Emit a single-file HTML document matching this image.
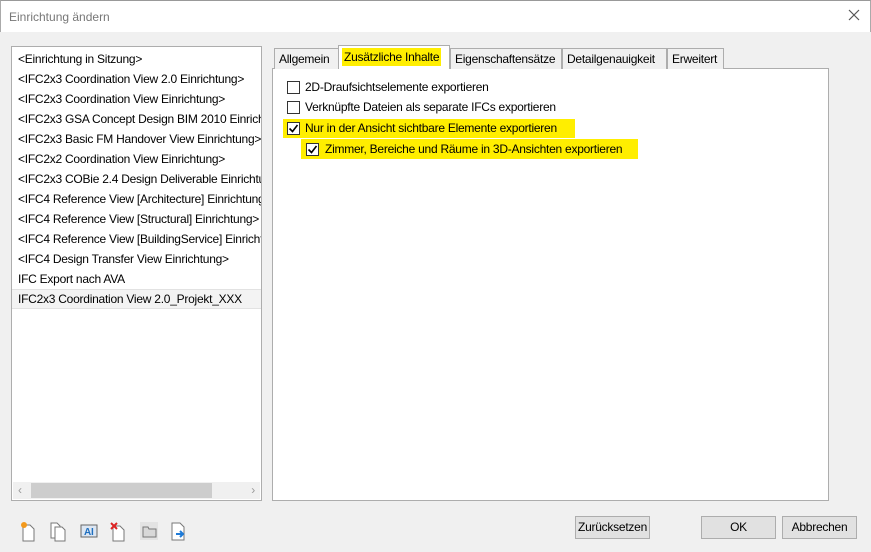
<!DOCTYPE html>
<html><head><style>
*{margin:0;padding:0;box-sizing:border-box}
body{width:871px;height:552px;background:#f0f0f0;font-family:"Liberation Sans",sans-serif;font-size:12px;letter-spacing:-0.25px;color:#000;position:relative;overflow:hidden}
.abs{position:absolute}
.title{left:0;top:0;width:871px;height:32px;background:#fff;color:#777;padding:9px 0 0 8px;font-size:12px;letter-spacing:0;border-top:1px solid #999;border-left:1px solid #aaa;border-right:1px solid #aaa}
.list{left:11px;top:46px;width:251px;height:455px;background:#fff;border:1px solid #adadad}
.item{height:20px;line-height:20px;padding-left:6px;white-space:nowrap;overflow:hidden;width:249px}
.sel{background:#f3f3f3;border-top:1px solid #e2e2e2;border-bottom:1px solid #e2e2e2;line-height:18px}
.sb{left:1px;bottom:1px;width:247px;height:17px;background:#f0f0f0}
.thumb{left:18px;top:1px;width:181px;height:15px;background:#cdcdcd}
.panel{left:272px;top:68px;width:557px;height:433px;background:#fff;border:1px solid #adadad}
.tab{top:48px;height:21px;border:1px solid #adadad;border-bottom:none;background:#f0f0f0;padding:3px 4px 0;white-space:nowrap;overflow:hidden}
.cb{width:13px;height:13px;border:1px solid #333;background:#fff}
.row{white-space:nowrap}
.hl{background:#ffee00}
.btn{height:23px;border:1px solid #adadad;background:#e1e1e1;text-align:center;line-height:21px}
</style></head><body>
<div class="abs title">Einrichtung ändern</div>
<svg class="abs" style="left:848px;top:9px" width="12" height="12"><path d="M1 1L11 11M11 1L1 11" stroke="#555" stroke-width="1.2"/></svg>
<div class="abs list">
<div style="height:2px"></div>
<div class="item">&lt;Einrichtung in Sitzung&gt;</div>
<div class="item">&lt;IFC2x3 Coordination View 2.0 Einrichtung&gt;</div>
<div class="item">&lt;IFC2x3 Coordination View Einrichtung&gt;</div>
<div class="item">&lt;IFC2x3 GSA Concept Design BIM 2010 Einrichtung&gt;</div>
<div class="item">&lt;IFC2x3 Basic FM Handover View Einrichtung&gt;</div>
<div class="item">&lt;IFC2x2 Coordination View Einrichtung&gt;</div>
<div class="item">&lt;IFC2x3 COBie 2.4 Design Deliverable Einrichtung&gt;</div>
<div class="item">&lt;IFC4 Reference View [Architecture] Einrichtung&gt;</div>
<div class="item">&lt;IFC4 Reference View [Structural] Einrichtung&gt;</div>
<div class="item">&lt;IFC4 Reference View [BuildingService] Einrichtung&gt;</div>
<div class="item">&lt;IFC4 Design Transfer View Einrichtung&gt;</div>
<div class="item">IFC Export nach AVA</div>
<div class="item sel">IFC2x3 Coordination View 2.0_Projekt_XXX</div>
<div class="abs sb"><div class="abs thumb"></div>
<span class="abs" style="left:5px;top:1px;color:#999">‹</span><span class="abs" style="right:5px;top:1px;color:#999">›</span></div>
</div>
<div class="abs panel"></div>
<div class="abs tab" style="left:274px;width:65px">Allgemein</div>
<div class="abs tab" style="left:338px;top:45px;height:24px;width:112px;background:#fff;padding:4px 3px 0"><span class="hl" style="padding:2px 2px">Zusätzliche Inhalte</span></div>
<div class="abs tab" style="left:450px;width:112px">Eigenschaftensätze</div>
<div class="abs tab" style="left:562px;width:105px">Detailgenauigkeit</div>
<div class="abs tab" style="left:667px;width:57px">Erweitert</div>
<div class="abs hl" style="left:283px;top:119px;width:292px;height:19px"></div>
<div class="abs hl" style="left:301px;top:139px;width:337px;height:20px"></div>
<div class="abs cb" style="left:287px;top:81px"></div><div class="abs row" style="left:305px;top:80px">2D-Draufsichtselemente exportieren</div>
<div class="abs cb" style="left:287px;top:101px"></div><div class="abs row" style="left:305px;top:100px">Verknüpfte Dateien als separate IFCs exportieren</div>
<div class="abs cb" style="left:287px;top:122px"><svg width="11" height="11" style="display:block"><path d="M1.5 5.5L4.5 8.5L9.5 2" stroke="#000" stroke-width="1.6" fill="none"/></svg></div><div class="abs row" style="left:305px;top:121px">Nur in der Ansicht sichtbare Elemente exportieren</div>
<div class="abs cb" style="left:306px;top:143px"><svg width="11" height="11" style="display:block"><path d="M1.5 5.5L4.5 8.5L9.5 2" stroke="#000" stroke-width="1.6" fill="none"/></svg></div><div class="abs row" style="left:325px;top:142px">Zimmer, Bereiche und Räume in 3D-Ansichten exportieren</div>
<svg class="abs" style="left:18px;top:522px" width="175" height="22">
<g fill="#fff" stroke="#777"><path d="M5 3h7l4 4v12H5z"/><path d="M33 1h6l3 3v12H33z"/><path d="M37 5h7l3 3v11H37z"/><path d="M95 4h7l4 4v11H95z"/><path d="M154 1h8l4 4v13H154z"/></g>
<circle cx="6" cy="3" r="3" fill="#f39a1e"/>
<rect x="63" y="3" width="16" height="12" fill="#dce6f2" stroke="#666"/><text x="66" y="13" font-size="10" font-weight="bold" fill="#1f6fbf" font-family="Liberation Sans">AI</text>
<path d="M93 1l6 6M99 1l-6 6" stroke="#d22" stroke-width="2"/>
<rect x="122" y="0" width="18" height="18" fill="#e3e3e3"/><path d="M125 5h5l1 2h7v8h-13z" fill="#d8d8d8" stroke="#777"/>
<path d="M158 12h7M162 9l3 3-3 3" stroke="#1e7bd8" stroke-width="2" fill="none"/>
</svg>
<div class="abs btn" style="left:575px;top:516px;width:75px">Zurücksetzen</div>
<div class="abs btn" style="left:701px;top:516px;width:75px">OK</div>
<div class="abs btn" style="left:782px;top:516px;width:75px">Abbrechen</div>
</body></html>
